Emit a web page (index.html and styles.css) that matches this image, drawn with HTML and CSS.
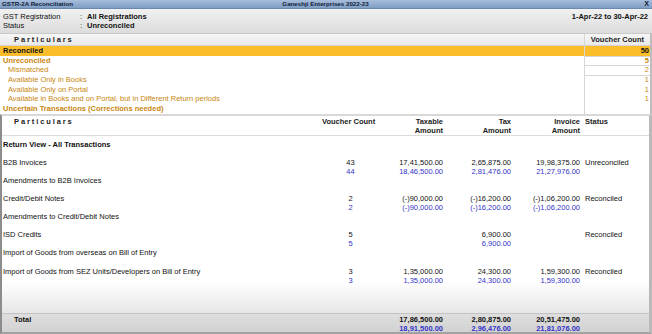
FILE: index.html
```html
<!DOCTYPE html>
<html lang="en">
<head>
    <meta charset="UTF-8">
    <meta name="viewport" content="width=device-width, initial-scale=1.0">
    <title>GSTR-2A Reconciliation</title>
    <link rel="stylesheet" href="styles.css">
</head>
<body>
    <div class="window">
        <div class="titlebar">
            <span class="title">GSTR-2A Reconciliation</span>
            <span class="company">Ganeshji Enterprises 2022-23</span>
            <span class="close">X</span>
        </div>

        <div class="info">
            <span>GST Registration</span><span>:</span><b>All Registrations</b><b class="period">1-Apr-22 to 30-Apr-22</b>
            <span>Status</span><span>:</span><b>Unreconciled</b><span></span>
        </div>

        <div class="summary">
            <div class="sum-row sum-head">
                <div class="spaced">Particulars</div>
                <div class="count">Voucher Count</div>
            </div>
            <div class="sum-row current">
                <div>Reconciled</div>
                <div class="count lined">50</div>
            </div>
            <div class="sum-row group">
                <div>Unreconciled</div>
                <div class="count lined">5</div>
            </div>
            <div class="sum-row sub">
                <div>Mismatched</div>
                <div class="count lined">2</div>
            </div>
            <div class="sum-row sub">
                <div>Available Only in Books</div>
                <div class="count">1</div>
            </div>
            <div class="sum-row sub">
                <div>Available Only on Portal</div>
                <div class="count">1</div>
            </div>
            <div class="sum-row sub">
                <div>Available in Books and on Portal, but in Different Return periods</div>
                <div class="count">1</div>
            </div>
            <div class="sum-row group">
                <div>Uncertain Transactions (Corrections needed)</div>
                <div class="count"></div>
            </div>
        </div>

        <div class="detail">
            <div class="det-row det-head">
                <div class="spaced">Particulars</div>
                <div class="vc">Voucher Count</div>
                <div class="amt">Taxable<br>Amount</div>
                <div class="amt">Tax<br>Amount</div>
                <div class="amt">Invoice<br>Amount</div>
                <div class="status">Status</div>
            </div>

            <div class="det-body">
                <div class="det-row">
                    <div class="strong">Return View - All Transactions</div>
                </div>
                <div class="det-row">
                    <div>B2B Invoices</div>
                    <div class="vc-val">43<br><i>44</i></div>
                    <div class="amt">17,41,500.00<br><i>18,46,500.00</i></div>
                    <div class="amt">2,65,875.00<br><i>2,81,476.00</i></div>
                    <div class="amt">19,98,375.00<br><i>21,27,976.00</i></div>
                    <div class="status">Unreconciled</div>
                </div>
                <div class="det-row">
                    <div>Amendments to B2B Invoices</div>
                </div>
                <div class="det-row">
                    <div>Credit/Debit Notes</div>
                    <div class="vc-val">2<br><i>2</i></div>
                    <div class="amt">(-)90,000.00<br><i>(-)90,000.00</i></div>
                    <div class="amt">(-)16,200.00<br><i>(-)16,200.00</i></div>
                    <div class="amt">(-)1,06,200.00<br><i>(-)1,06,200.00</i></div>
                    <div class="status">Reconciled</div>
                </div>
                <div class="det-row">
                    <div>Amendments to Credit/Debit Notes</div>
                </div>
                <div class="det-row">
                    <div>ISD Credits</div>
                    <div class="vc-val">5<br><i>5</i></div>
                    <div class="amt"></div>
                    <div class="amt">6,900.00<br><i>6,900.00</i></div>
                    <div class="amt"></div>
                    <div class="status">Reconciled</div>
                </div>
                <div class="det-row">
                    <div>Import of Goods from overseas on Bill of Entry</div>
                </div>
                <div class="det-row">
                    <div>Import of Goods from SEZ Units/Developers on Bill of Entry</div>
                    <div class="vc-val">3<br><i>3</i></div>
                    <div class="amt">1,35,000.00<br><i>1,35,000.00</i></div>
                    <div class="amt">24,300.00<br><i>24,300.00</i></div>
                    <div class="amt">1,59,300.00<br><i>1,59,300.00</i></div>
                    <div class="status">Reconciled</div>
                </div>
            </div>

            <div class="det-row det-total">
                <div class="total-label">Total</div>
                <div></div>
                <div class="amt">17,86,500.00<br><i>18,91,500.00</i></div>
                <div class="amt">2,80,875.00<br><i>2,96,476.00</i></div>
                <div class="amt">20,51,475.00<br><i>21,81,076.00</i></div>
                <div></div>
            </div>
        </div>
    </div>
</body>
</html>
```

FILE: styles.css
```css
* {
    margin: 0;
    padding: 0;
    box-sizing: border-box;
}

body {
    font-family: "Liberation Sans", Arial, sans-serif;
    font-size: 7.5px;
    color: #111;
    background: #fff;
}

.window {
    width: 652px;
    height: 334px;
    display: flex;
    flex-direction: column;
    overflow: hidden;
}

/* title bar */
.titlebar {
    height: 9px;
    display: grid;
    grid-template-columns: 1fr auto 1fr;
    align-items: center;
    padding: 0 3px 0 2px;
    background: linear-gradient(#a7bddb, #7f9dc4);
    border-bottom: 1px solid #6a88b0;
    color: #0f2038;
    font-size: 6.2px;
    font-weight: bold;
    line-height: 8px;
}

.close {
    justify-self: end;
    font-size: 7px;
}

/* registration / status block */
.info {
    height: 24px;
    display: grid;
    grid-template-columns: 77px 7px auto 1fr;
    grid-auto-rows: 9px;
    align-items: center;
    padding: 3px 4px 0 3px;
    background: linear-gradient(#f1f1f1, #dcdcdc);
    line-height: 9px;
}

.period {
    justify-self: end;
}

/* summary table */
.summary {
    border-top: 1px solid #c9c9c9;
    border-right: 2px solid #bdbdbd;
}

.sum-row {
    display: grid;
    grid-template-columns: 1fr 66px;
    height: 9.67px;
    line-height: 9.67px;
    padding-left: 3px;
    color: #c7870f;
}

.sum-row .count {
    border-left: 1px solid #d6d6d6;
    text-align: right;
    padding-right: 1px;
}

.sum-head {
    height: 12px;
    line-height: 11px;
    background: linear-gradient(#f6f6f6, #e9e9e9);
    border-bottom: 1px solid #d2d2d2;
    color: #222;
    font-weight: bold;
}

.sum-head .count {
    padding-right: 6px;
}

.spaced {
    padding-left: 11px;
    letter-spacing: 1.9px;
}

.current {
    background: #fcbd2b;
    color: #111;
    font-weight: bold;
}

.group {
    font-weight: bold;
}

.sub {
    padding-left: 8px;
}

.sum-row .lined {
    border-bottom: 1px solid #d6d6d6;
}

/* detail table */
.detail {
    flex: 1;
    display: flex;
    flex-direction: column;
    border-top: 2px solid #d8d8d8;
    border-left: 2px solid #8c8c8c;
    border-right: 3px solid #b9b9b9;
    border-bottom: 2px solid #a3a3a3;
}

.det-row {
    display: grid;
    grid-template-columns: 319px 57px 64px 68px 69px 1fr;
    padding-left: 1px;
    height: 18.1px;
    line-height: 9.05px;
}

.det-head {
    height: 20px;
    line-height: 9px;
    padding-top: 1px;
    border-bottom: 1px solid #dcdcdc;
    font-weight: bold;
    color: #222;
}

.det-body {
    flex: 1;
    padding-top: 4.3px;
    background: linear-gradient(#fff 0, #fff 145px, #e6e6e6 100%);
}

.amt {
    text-align: right;
}

.vc-val {
    text-align: center;
}

.status {
    padding-left: 5px;
}

.strong {
    font-weight: bold;
}

i {
    font-style: normal;
    color: #3434c6;
}

.det-total {
    height: 19px;
    padding-top: 0.5px;
    border-top: 1px solid #c3c3c3;
    background: linear-gradient(#dedede, #d2d2d2);
    font-weight: bold;
}

.total-label {
    padding-left: 11px;
}
```
